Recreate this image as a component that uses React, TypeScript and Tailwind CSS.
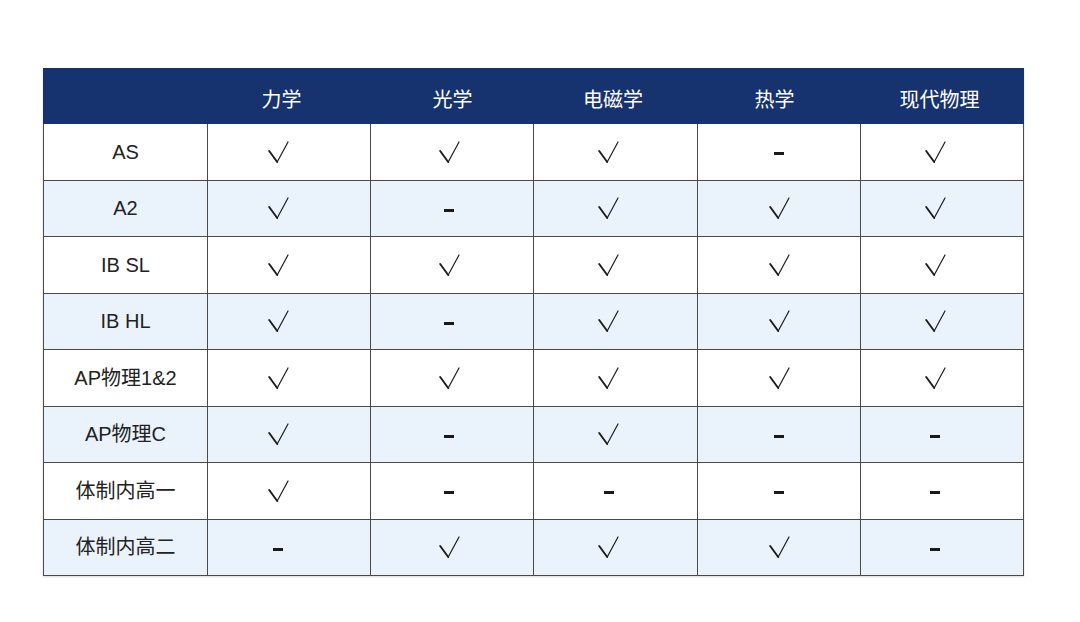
const headers = ['', '力学', '光学', '电磁学', '热学', '现代物理']

// column widths measured from the reference (borders included)
const cols = 'grid grid-cols-[165px_163px_163px_164px_163px_163px]'

// the source image isn't perfectly centred, nudge per column
const headShift = ['', '-translate-x-[8px]', 'translate-x-0', '-translate-x-[3px]', '-translate-x-[5px]', '-translate-x-[3px]']
const markShift = ['-translate-x-[11px]', '-translate-x-[3px]', '-translate-x-[7px]', 'translate-x-0', '-translate-x-[7px]']

const rows: { label: string; marks: boolean[] }[] = [
  { label: 'AS', marks: [true, true, true, false, true] },
  { label: 'A2', marks: [true, false, true, true, true] },
  { label: 'IB SL', marks: [true, true, true, true, true] },
  { label: 'IB HL', marks: [true, false, true, true, true] },
  { label: 'AP物理1&2', marks: [true, true, true, true, true] },
  { label: 'AP物理C', marks: [true, false, true, false, false] },
  { label: '体制内高一', marks: [true, false, false, false, false] },
  { label: '体制内高二', marks: [false, true, true, true, false] },
]

function Mark({ ok }: { ok: boolean }) {
  if (ok) {
    return (
      <svg width="21" height="22" viewBox="0 0 21 22" fill="none" stroke="#1c1c1c" strokeLinecap="round">
        <path d="M1.2 10 L9.2 21" strokeWidth="1.9" />
        <path d="M9.2 21 L20 1" strokeWidth="1.2" />
      </svg>
    )
  }
  return <span className="block w-[10px] h-[3px] mt-[4px] bg-[#1a1a1a]" />
}

export default function App() {
  return (
    <div className="w-[1080px] h-[622px] bg-white pt-[68px] pl-[43px] font-['Liberation_Sans','Noto_Sans_CJK_SC',sans-serif]">
      <div className="w-[981px] shadow-[0_1px_2px_rgba(0,0,0,0.15)]">
        {/* header */}
        <div className={`${cols} h-[56px] bg-[#17336f]`}>
          {headers.map((h, i) => (
            <div key={i} className="flex items-center justify-center pt-[6px] text-white text-[20px] font-['Noto_Sans_CJK_SC',sans-serif]">
              <span className={headShift[i]}>{h}</span>
            </div>
          ))}
        </div>
        {/* body */}
        {rows.map((r, ri) => (
          <div
            key={r.label}
            className={`${cols} h-[56.5px] border-b border-[#4a4a4a] ${ri % 2 === 1 ? 'bg-[#eaf2fc]' : 'bg-white'}`}
          >
            <div className="flex items-center justify-center border-x border-[#4a4a4a] text-[20px] text-[#222]">
              {r.label}
            </div>
            {r.marks.map((m, mi) => (
              <div key={mi} className="flex items-center justify-center border-r border-[#4a4a4a]">
                <div className={markShift[mi]}>
                  <Mark ok={m} />
                </div>
              </div>
            ))}
          </div>
        ))}
      </div>
    </div>
  )
}
